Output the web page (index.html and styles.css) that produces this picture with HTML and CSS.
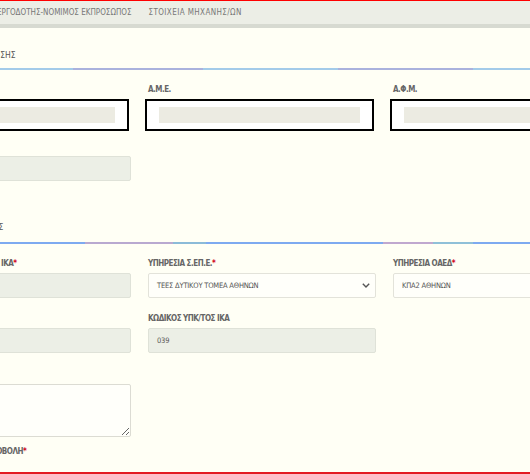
FILE: index.html
```html
<!DOCTYPE html>
<html lang="el">
<head>
  <meta charset="UTF-8">
  <title>Αίτηση</title>
  <link rel="stylesheet" href="styles.css">
</head>
<body>
  <div class="topline"></div>
  <div class="tabs">
    <span class="tab">ΕΡΓΟΔΟΤΗΣ-ΝΟΜΙΜΟΣ ΕΚΠΡΟΣΩΠΟΣ</span>
    <span class="tab tab-wide">ΣΤΟΙΧΕΙΑ ΜΗΧΑΝΗΣ/ΩΝ</span>
  </div>

  <div class="page">
    <!-- στοιχεια επιχειρησης -->
    <div class="section first">
      <div class="heading h1">ΣΤΟΙΧΕΙΑ ΕΠΙΧΕΙΡΗΣΗΣ</div>
      <div class="rule"></div>
      <div class="row row-boxes">
        <div class="field">
          <label>ΕΠΩΝΥΜΙΑ</label>
          <div class="box"><div class="bar"></div></div>
        </div>
        <div class="field">
          <label>Α.Μ.Ε.</label>
          <div class="box"><div class="bar"></div></div>
        </div>
        <div class="field">
          <label>Α.Φ.Μ.</label>
          <div class="box"><div class="bar"></div></div>
        </div>
      </div>
      <div class="row">
        <div class="field">
          <label>Δ.Ο.Υ.</label>
          <div class="input disabled"></div>
        </div>
      </div>
    </div>

    <!-- υπηρεσιες -->
    <div class="section second">
      <div class="heading h2">ΑΡΜΟΔΙΕΣ ΥΠΗΡΕΣΙΕΣ</div>
      <div class="rule rule-alt"></div>
      <div class="row">
        <div class="field">
          <label class="l-ika">ΤΟΠΙΚΟ ΥΠΟΚΑΤΑΣΤΗΜΑ ΙΚΑ<span class="req">*</span></label>
          <div class="input disabled"></div>
        </div>
        <div class="field">
          <label>ΥΠΗΡΕΣΙΑ Σ.ΕΠ.Ε.<span class="req">*</span></label>
          <div class="input select">
            <span>ΤΕΕΣ ΔΥΤΙΚΟΥ ΤΟΜΕΑ ΑΘΗΝΩΝ</span>
            <svg width="8" height="5" viewBox="0 0 8 5"><path d="M0.8 0.8l3.2 3.2 3.2-3.2" fill="none" stroke="#555" stroke-width="1.4"/></svg>
          </div>
        </div>
        <div class="field">
          <label>ΥΠΗΡΕΣΙΑ ΟΑΕΔ<span class="req">*</span></label>
          <div class="input">ΚΠΑ2 ΑΘΗΝΩΝ</div>
        </div>
      </div>
      <div class="row">
        <div class="field">
          <label>ΚΩΔΙΚΟΣ</label>
          <div class="input disabled"></div>
        </div>
        <div class="field">
          <label>ΚΩΔΙΚΟΣ ΥΠΚ/ΤΟΣ ΙΚΑ</label>
          <div class="input disabled">039</div>
        </div>
      </div>
      <div class="row row-text">
        <div class="field">
          <label>ΣΧΟΛΙΑ</label>
          <textarea></textarea>
        </div>
      </div>
      <div class="row">
        <div class="field">
          <label class="l-date">ΗΜΕΡΟΜΗΝΙΑ ΥΠΟΒΟΛΗ<span class="req">*</span></label>
        </div>
      </div>
    </div>
  </div>
  <div class="bottomline"></div>
</body>
</html>
```

FILE: styles.css
```css
html, body {
  margin: 0;
  height: 100%;
}
body {
  background-color: #fffff5;
  font-family: "DejaVu Sans Condensed", "Liberation Sans", sans-serif;
  color: #555;
  overflow: hidden;
  position: relative;
}
.topline {
  height: 1px;
  background-color: #f00;
}
.tabs {
  height: 23px;
  background-color: #eceee6;
  border-bottom: 4px solid #d7dad1;
  display: flex;
  gap: 17px;
  margin-left: -3px;
  align-items: center;
}
.tab {
  font-size: 8px;
  color: #777;
  white-space: nowrap;
}
.tab-wide {
  letter-spacing: 0.4px;
}
.page {
  margin-left: -97px;
  width: 718px;
}
.section.first {
  padding-top: 21px;
}
.section.second {
  padding-top: 25px;
}
.heading {
  font-size: 8.5px;
  line-height: 12px;
  height: 12px;
  white-space: nowrap;
  color: #555;
}
.h1 {
  padding-left: 24px;
}
.h2 {
  padding-left: 16px;
}
.rule {
  height: 2px;
  margin-top: 7px;
  margin-bottom: 14px;
  background: linear-gradient(to right, #a3cbe9 0 170px, #aab2dd 170px 300px, #a3cbe9 300px 435px, #aab2dd 435px 570px, #a3cbe9 570px);
}
.rule-alt {
  margin-top: 9px;
  background: linear-gradient(to right, #7eaaf0 0 182px, #b9a9d0 182px 270px, #8bbbd8 270px 303px, #7eaaf0 303px 480px, #c0a8cf 480px 530px, #8fc0d8 530px 570px, #7eaaf0 570px);
}
.row {
  display: flex;
  gap: 17px;
  margin-bottom: 15px;
}
.row-boxes {
  margin-bottom: 10px;
}
.row-text {
  margin-bottom: 9px;
}
.field {
  width: 228px;
}
label {
  display: block;
  font-size: 8px;
  letter-spacing: -0.5px;
  line-height: 11px;
  font-weight: bold;
  color: #666;
  white-space: nowrap;
  margin-bottom: 4px;
}
.l-ika {
  padding-left: 4px;
}
.l-date {
  padding-left: 29px;
}
.req {
  color: #d0021b;
}
.box {
  margin-left: -3px;
  width: 229px;
  box-sizing: border-box;
  border: 2px solid #000;
  background-color: #fff;
  padding: 6px 12px;
}
.bar {
  height: 16px;
  background-color: #ecebe2;
}
.input {
  height: 25px;
  box-sizing: border-box;
  border: 1px solid #e3e3da;
  border-radius: 2px;
  background-color: #fffffa;
  padding: 0 8px;
  font-size: 7.5px;
  letter-spacing: -0.2px;
  line-height: 23px;
  color: #555;
}
.input.disabled {
  background-color: #ecefe6;
  border-color: #dfe2d8;
}
.select {
  display: flex;
  align-items: center;
  justify-content: space-between;
  padding-right: 5px;
}
textarea {
  display: block;
  width: 228px;
  height: 53px;
  box-sizing: border-box;
  margin: 5px 0 0;
  border: 1px solid #dcdcd3;
  border-radius: 2px;
  background-color: #fffffa;
}
.bottomline {
  position: absolute;
  left: 0;
  right: 0;
  top: 472px;
  height: 2px;
  background-color: #e31b23;
}
```
